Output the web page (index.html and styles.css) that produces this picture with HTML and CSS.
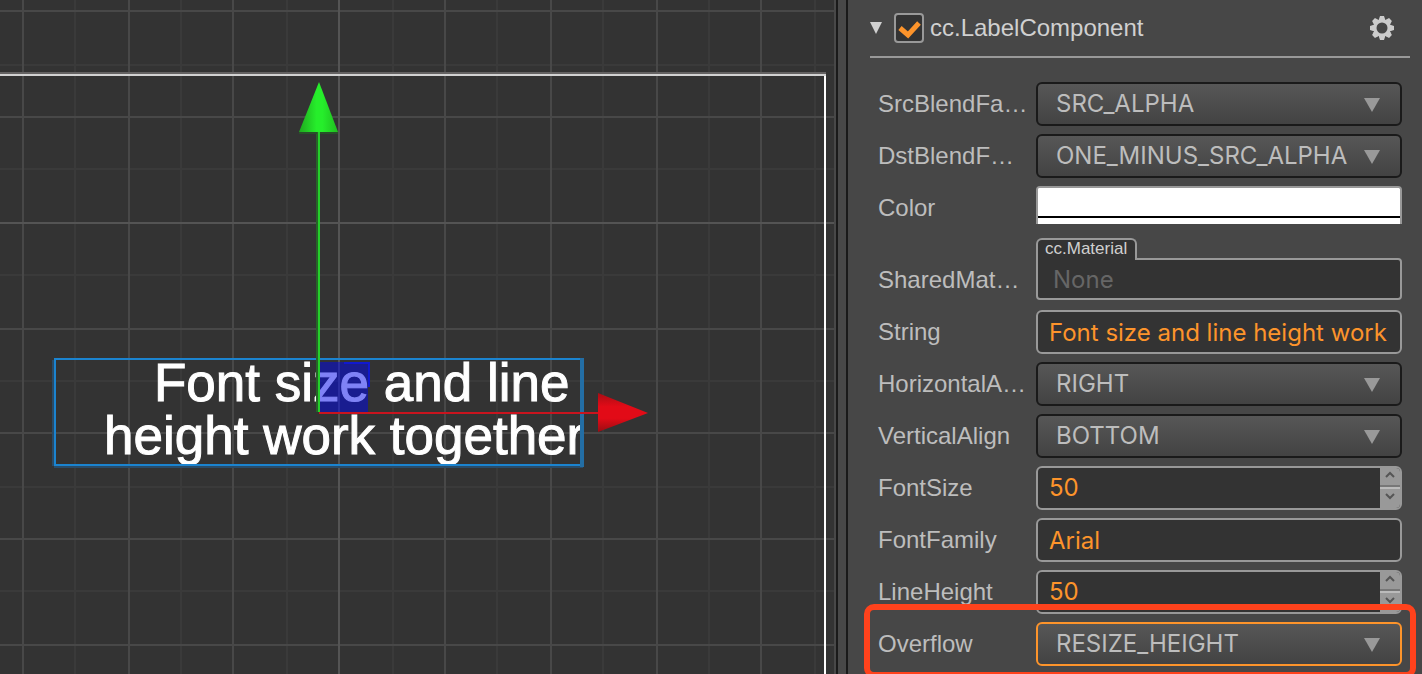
FILE: index.html
```html
<!DOCTYPE html>
<html lang="en">
<head>
<meta charset="utf-8">
<title>Label component</title>
<link rel="stylesheet" href="styles.css">
</head>
<body>
<div class="app">
  <main class="scene">
    <svg class="canvas" role="img" aria-label="Scene view">
      <defs>
        <linearGradient id="green-cone"><stop offset="0" stop-color="#1fa81f"/><stop offset=".45" stop-color="#26ee2b"/><stop offset=".6" stop-color="#26ee2b"/><stop offset="1" stop-color="#20bd20"/></linearGradient>
        <linearGradient id="red-cone" x2="0" y2="1"><stop offset="0" stop-color="#a80d14"/><stop offset=".35" stop-color="#e20b17"/><stop offset=".65" stop-color="#e20b17"/><stop offset="1" stop-color="#990d13"/></linearGradient>
      </defs>
      <path class="grid-minor" d="M75 0V2000M181 0V2000M287 0V2000M393 0V2000M497 0V2000M603 0V2000M709 0V2000M815 0V2000M0 65H2000M0 169H2000M0 275H2000M0 381H2000M0 487H2000M0 591H2000"/>
      <path class="grid-major" d="M23 0V2000M129 0V2000M233 0V2000M445 0V2000M551 0V2000M657 0V2000M761 0V2000M0 11H2000M0 117H2000M0 329H2000M0 433H2000M0 539H2000M0 645H2000"/>
      <path class="grid-axis" d="M339 0V2000M0 223H2000"/>
      <path d="M0 73H826" stroke="#646262" stroke-width="2"/>
      <path d="M0 75H826" stroke="#d2d2d2" stroke-width="2"/>
      <path d="M825 76V2000" stroke="#fff" stroke-width="2"/>
      <text class="scene-text"><tspan x="154" y="401">Font size and line</tspan><tspan x="104" y="454">height work together</tspan></text>
      <path d="M53 360V466M54 467H583" stroke="#2a4c68" stroke-width="2" fill="none"/>
      <path d="M55 466V359H582M54 465H582" stroke="#1b84d0" stroke-width="2" fill="none"/>
      <path d="M582 358V467" stroke="#236ea5" stroke-width="4"/>
      <path d="M320 362H368V412H320Z" fill="#0005ee" fill-opacity=".5"/>
      <path d="M344 363H369V387" stroke="#1119cf" stroke-width="2" fill="none"/>
      <path d="M317 132V412" stroke="#286329" stroke-width="2"/>
      <path d="M319 132V412" stroke="#25cf2b" stroke-width="2"/>
      <path d="M319 82L338 132H299Z" fill="url(#green-cone)"/>
      <path d="M299 133H317M320 133H338" stroke="#285029" stroke-width="2"/>
      <path d="M319 413H599" stroke="#c9141e" stroke-width="2"/>
      <path d="M598 393L648 413L598 432Z" fill="url(#red-cone)"/>
    </svg>
  </main>
  <div class="splitter"></div>
  <section class="inspector">
    <header class="head">
      <button class="fold" aria-label="Fold"><svg width="12" height="12"><path d="M0 0H12L6 12Z" fill="#d0d0d0"/></svg></button>
      <span class="check">
        <input type="checkbox" id="enabled" checked>
        <svg class="tick" width="30" height="30"><path d="M6 15L14 22L25 10" fill="none" stroke="#fd942b" stroke-width="5"/></svg>
      </span>
      <label class="title" for="enabled">cc.LabelComponent</label>
      <button class="gear" aria-label="Settings">
        <svg width="24" height="24" viewBox="-12 -12 24 24"><g fill="#ccc"><path id="teeth" d="M-3 -9L-2 -12H2L3 -9V9L2 12H-2L-3 9Z"/><use href="#teeth" transform="rotate(45)"/><use href="#teeth" transform="rotate(90)"/><use href="#teeth" transform="rotate(135)"/><circle r="9"/></g><circle r="5.5" fill="#474747"/></svg>
      </button>
    </header>
    <form class="props">
      <div class="row"><label for="src">SrcBlendFa…</label>
        <span class="pick"><select id="src"><option>SRC_ALPHA</option></select><svg class="caret" width="16" height="14"><path d="M0 0H16L8 14Z"/></svg></span></div>
      <div class="row"><label for="dst">DstBlendF…</label>
        <span class="pick"><select id="dst"><option>ONE_MINUS_SRC_ALPHA</option></select><svg class="caret" width="16" height="14"><path d="M0 0H16L8 14Z"/></svg></span></div>
      <div class="row"><label for="color">Color</label><input class="color" type="color" id="color" value="#ffffff"></div>
      <div class="row material"><label for="mat">SharedMat…</label>
        <div class="slot"><span class="tab">cc.Material</span><input class="asset" id="mat" type="text" placeholder="None" readonly></div></div>
      <div class="row"><label for="str">String</label><input class="field" id="str" type="text" value="Font size and line height work"></div>
      <div class="row"><label for="hal">HorizontalA…</label>
        <span class="pick"><select id="hal"><option>RIGHT</option></select><svg class="caret" width="16" height="14"><path d="M0 0H16L8 14Z"/></svg></span></div>
      <div class="row"><label for="val">VerticalAlign</label>
        <span class="pick"><select id="val"><option>BOTTOM</option></select><svg class="caret" width="16" height="14"><path d="M0 0H16L8 14Z"/></svg></span></div>
      <div class="row"><label for="size">FontSize</label>
        <span class="number"><input id="size" type="text" inputmode="numeric" value="50"><span class="steps">
          <button type="button" aria-label="Increase font size"><svg width="10" height="8"><path d="M1 7L5 3L9 7"/></svg></button>
          <button type="button" aria-label="Decrease font size"><svg width="10" height="8"><path d="M1 1L5 5L9 1"/></svg></button></span></span></div>
      <div class="row"><label for="family">FontFamily</label><input class="field" id="family" type="text" value="Arial"></div>
      <div class="row"><label for="lh">LineHeight</label>
        <span class="number"><input id="lh" type="text" inputmode="numeric" value="50"><span class="steps">
          <button type="button" aria-label="Increase line height"><svg width="10" height="8"><path d="M1 7L5 3L9 7"/></svg></button>
          <button type="button" aria-label="Decrease line height"><svg width="10" height="8"><path d="M1 1L5 5L9 1"/></svg></button></span></span></div>
      <div class="row marked"><label for="over">Overflow</label>
        <span class="pick"><select id="over"><option>RESIZE_HEIGHT</option></select><svg class="caret" width="16" height="14"><path d="M0 0H16L8 14Z"/></svg></span></div>
    </form>
  </section>
</div>
</body>
</html>
```
FILE: styles.css
```css
* { box-sizing: border-box; }
body {
  margin: 0;
  background: #474747;
  color: #bdbdbd;
  font: 24px/28px "Liberation Sans", Arial, sans-serif;
}
.app {
  display: grid;
  grid-template-columns: 836fr 12px 574fr;
  height: 100vh;
  overflow: hidden;
}
.scene {
  background: #333;
  border-right: 2px solid #484848;
  min-width: 0;
  overflow: hidden;
}
.canvas { display: block; width: 100%; height: 100%; }
.grid-minor { stroke: #3a3a3a; stroke-width: 2; }
.grid-major { stroke: #484848; stroke-width: 2; }
.grid-axis { stroke: #545454; stroke-width: 2; }
.scene-text { font-size: 53px; fill: #fff; stroke: #fff; stroke-width: 1px; }
.splitter {
  background: #484848;
  border: solid #1a1a1a;
  border-width: 0 2px;
}
button { padding: 0; border: 0; background: none; }
svg { display: block; }
.inspector { min-width: 0; }
.head {
  display: flex;
  align-items: center;
  height: 58px;
  margin: 0 12px 0 22px;
  border-bottom: 2px solid #999;
}
.fold { margin-right: 12px; }
.check { position: relative; width: 30px; height: 30px; margin-right: 6px; }
.check input {
  display: block;
  appearance: none;
  width: 30px;
  height: 30px;
  margin: 0;
  background: #333;
  border: 2px solid #999;
  border-radius: 4px;
}
.tick { position: absolute; inset: 0; pointer-events: none; }
.title { flex: 1; color: #d0d0d0; }
.gear { margin-right: 16px; }
.props {
  display: flex;
  flex-direction: column;
  gap: 8px;
  padding: 24px 20px 0 30px;
}
.row {
  position: relative;
  display: grid;
  grid-template-columns: 158px 1fr;
  min-height: 44px;
}
.row > label { line-height: 44px; white-space: nowrap; }
select, .field, .asset, .number input {
  width: 100%;
  min-width: 0;
  margin: 0;
  font: 24px/28px Inter, "Liberation Sans", sans-serif;
  outline: 0;
}
.pick { position: relative; display: flex; }
select {
  appearance: none;
  height: 44px;
  padding: 0 40px 0 18px;
  color: #bdbdbd;
  background: linear-gradient(#575757, #434343);
  border: 2px solid #1a1a1a;
  border-radius: 6px;
}
.caret { position: absolute; top: 16px; right: 22px; fill: #999; pointer-events: none; }
.color {
  appearance: none;
  width: 100%;
  height: 38px;
  padding: 0 0 6px;
  background: #fff;
  border: 2px solid #999;
  border-bottom: 0;
  border-radius: 4px 4px 0 0;
}
.color::-webkit-color-swatch-wrapper { padding: 0; }
.color::-webkit-color-swatch { border: 0; border-bottom: 2px solid #000; }
.material { min-height: 64px; }
.material > label { padding-top: 20px; }
.slot { display: flex; flex-direction: column; align-items: flex-start; }
.tab {
  z-index: 1;
  height: 22px;
  margin-bottom: -2px;
  padding: 0 8px 0 7px;
  font-size: 17px;
  line-height: 18px;
  color: #d0d0d0;
  background: #333;
  border: 2px solid #999;
  border-bottom: 0;
  border-radius: 6px 6px 0 0;
}
.asset {
  height: 42px;
  padding: 0 15px;
  background: #333;
  border: 2px solid #999;
  border-radius: 0 4px 4px 4px;
}
.asset::placeholder { color: #666; opacity: 1; }
.field, .number {
  height: 44px;
  color: #fd942b;
  background: #333;
  border: 2px solid #999;
  border-radius: 6px;
}
.field { padding: 0 11px; }
.number { display: flex; overflow: hidden; }
.number input {
  flex: 1;
  padding: 0 11px;
  color: #fd942b;
  background: none;
  border: 0;
}
.steps { display: flex; flex-direction: column; width: 20px; background: #999; }
.steps button { flex: 1; display: grid; justify-content: center; align-content: start; }
.steps button:first-child { padding-top: 2px; border-bottom: 2px solid #777; }
.steps button:last-child { padding-top: 4px; border-top: 2px solid #bbb; }
.steps path { fill: none; stroke: #555; stroke-width: 2; }
.marked select { border-color: #fd942b; }
.marked::after {
  content: "";
  position: absolute;
  inset: -18px -14px -12px;
  border: 6px solid #ff421c;
  border-radius: 10px;
  pointer-events: none;
}
```
